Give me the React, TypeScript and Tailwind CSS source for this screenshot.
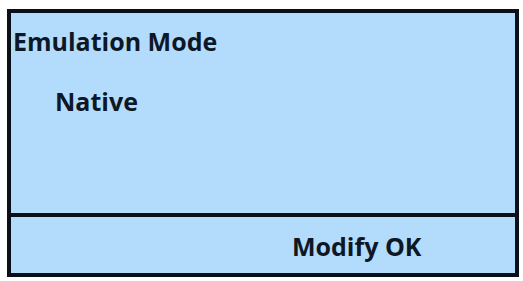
export default function App() {
  return (
    <div className="h-[281px] w-[523px] bg-white pl-[7px] pt-[9px]" style={{ fontFamily: '"Open Sans", "Liberation Sans", sans-serif' }}>
      <div className="flex h-[268px] w-[512px] flex-col border-4 border-[#0b0f18] bg-[#b3dcfc] text-[#0d1726]">
        <div className="flex h-[204px] flex-col border-b-4 border-[#0b0f18] pl-[2px] pt-[13px]">
          <div className="text-[25px] font-bold leading-[30px]">Emulation Mode</div>
          <div className="mt-[30px] pl-[42px] text-[25px] font-bold leading-[30px]">Native</div>
        </div>
        <div className="flex flex-1 items-center pl-[281px] pt-[2px]">
          <div className="text-[25px] font-bold leading-[30px]">Modify OK</div>
        </div>
      </div>
    </div>
  );
}
